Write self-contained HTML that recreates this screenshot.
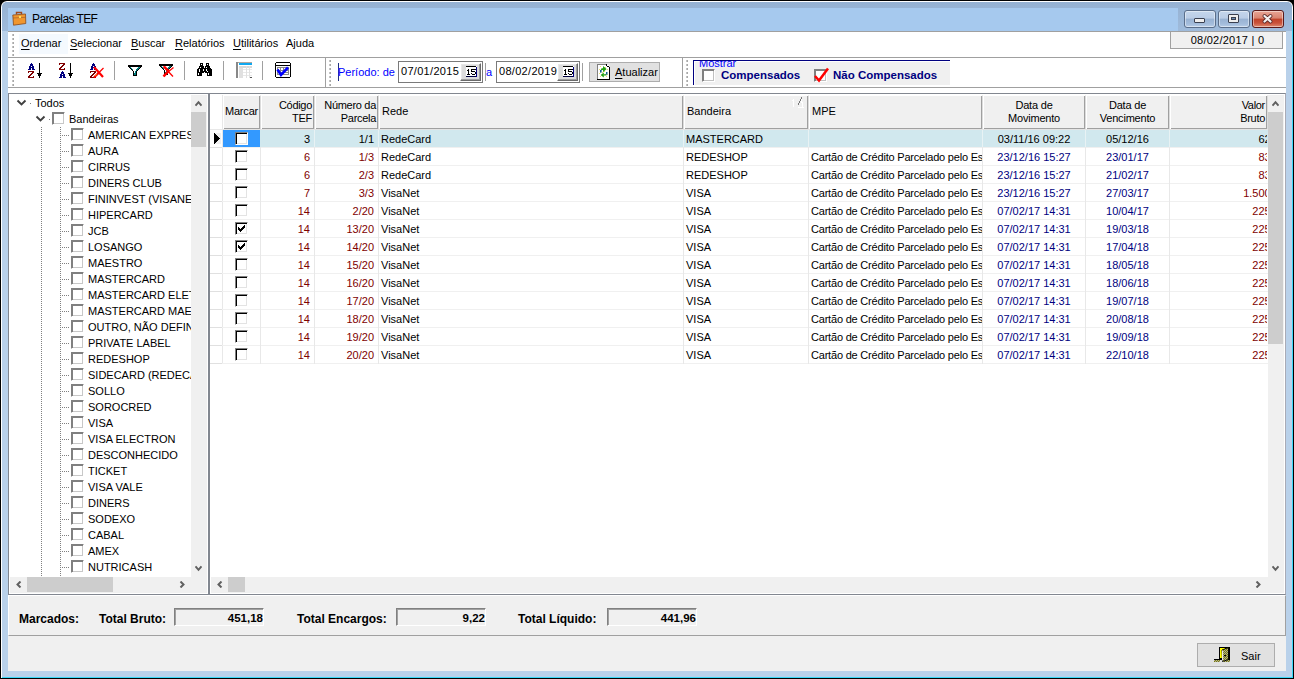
<!DOCTYPE html><html><head><meta charset="utf-8"><style>
*{box-sizing:border-box;margin:0;padding:0}
html,body{width:1294px;height:679px;overflow:hidden;background:#000}
body{position:relative;font-family:"Liberation Sans",sans-serif;font-size:11px;color:#000}
.a{position:absolute}
.t{position:absolute;white-space:nowrap;line-height:12px}
u{text-underline-offset:2px}
</style></head><body>
<div class="a" style="left:1px;top:1px;width:1292px;height:677px;background:#fff;border-radius:6px 6px 0 0"></div>
<div class="a" style="left:2px;top:2px;width:1290px;height:675px;background:#b9d1ea;border-radius:5px 5px 0 0"></div>
<div class="a" style="left:2px;top:2px;width:1290px;height:29px;background:linear-gradient(#95b1d2,#9fbbdb);border-radius:5px 5px 0 0"></div>
<div class="a" style="left:1292px;top:20px;width:1px;height:658px;background:#3ad8f8"></div>
<div class="a" style="left:2px;top:677px;width:1291px;height:1px;background:#3ad8f8"></div>
<div class="a" style="left:8px;top:8px;width:1170px;height:23px;background:#a6c9ee"></div>
<div class="t" style="left:32px;top:12px;font-size:12px;line-height:14px;letter-spacing:-0.6px">Parcelas TEF</div>
<svg class="a" style="left:12px;top:11px" width="15" height="15" viewBox="0 0 15 15">
<path d="M4.5 3.5 V1.5 H9.5 V3.5" fill="none" stroke="#a0481a" stroke-width="1.4"/>
<path d="M0.8 4 L13.5 3 L13.8 12.5 L1.5 14.2 Z" fill="#f0962e" stroke="#8a4a1a" stroke-width="0.8"/>
<path d="M1 7 L13.6 6.3" stroke="#9a5a2a" stroke-width="0.6"/>
<rect x="7" y="5" width="2" height="2" fill="#f8e060"/>
</svg>
<div class="a" style="left:1184px;top:10px;width:32px;height:18px;background:linear-gradient(#c4d6ec 0%,#bacde6 45%,#98b2d2 50%,#a3bcdb 80%,#b7cde7 100%);border:1px solid #5a6e8a;border-radius:3px;box-shadow:inset 0 0 0 1px rgba(255,255,255,.45)"></div>
<div class="a" style="left:1218px;top:10px;width:32px;height:18px;background:linear-gradient(#c4d6ec 0%,#bacde6 45%,#98b2d2 50%,#a3bcdb 80%,#b7cde7 100%);border:1px solid #5a6e8a;border-radius:3px;box-shadow:inset 0 0 0 1px rgba(255,255,255,.45)"></div>
<div class="a" style="left:1252px;top:10px;width:32px;height:18px;background:linear-gradient(#e8a596 0%,#d9836f 45%,#c0432a 50%,#c9523a 75%,#dd8a70 100%);border:1px solid #5a1a1a;border-radius:3px;box-shadow:inset 0 0 0 1px rgba(255,255,255,.45)"></div>
<div class="a" style="left:1194px;top:18px;width:11px;height:5px;background:#eee;border:1px solid #3a4050;border-radius:1px"></div>
<div class="a" style="left:1228px;top:14px;width:11px;height:9px;background:#eee;border:1px solid #3a4050;border-radius:1px"></div>
<div class="a" style="left:1231px;top:17px;width:5px;height:3px;background:#6a8ab0;border:1px solid #3a4050"></div>
<svg class="a" style="left:1261px;top:13px" width="14" height="12" viewBox="0 0 14 12">
<path d="M3.5 3 L9.5 8.5 M9.5 3 L3.5 8.5" stroke="#5a2a2a" stroke-width="3.8" stroke-linecap="round"/>
<path d="M3.5 3 L9.5 8.5 M9.5 3 L3.5 8.5" stroke="#f4f0f0" stroke-width="2.2" stroke-linecap="round"/>
</svg>
<div class="a" style="left:8px;top:31px;width:1278px;height:640px;background:#f0f0f0"></div>
<div class="a" style="left:8px;top:31px;width:1278px;height:27px;background:#fff;border-top:1px solid #a0a0a0;border-bottom:1px solid #a0a0a0"></div>
<div class="a" style="left:8px;top:57px;width:1278px;height:31px;background:#fff;border-top:1px solid #a0a0a0;border-bottom:1px solid #a0a0a0"></div>
<div class="a" style="left:8px;top:88px;width:1278px;height:5px;background:#fff"></div>
<div class="a" style="left:12px;top:34px;width:2px;height:2px;background:#a8a8a8;box-shadow:inset 1px 0 0 #c4c4c4"></div>
<div class="a" style="left:12px;top:38px;width:2px;height:2px;background:#a8a8a8;box-shadow:inset 1px 0 0 #c4c4c4"></div>
<div class="a" style="left:12px;top:42px;width:2px;height:2px;background:#a8a8a8;box-shadow:inset 1px 0 0 #c4c4c4"></div>
<div class="a" style="left:12px;top:46px;width:2px;height:2px;background:#a8a8a8;box-shadow:inset 1px 0 0 #c4c4c4"></div>
<div class="a" style="left:12px;top:50px;width:2px;height:2px;background:#a8a8a8;box-shadow:inset 1px 0 0 #c4c4c4"></div>
<div class="a" style="left:12px;top:54px;width:2px;height:2px;background:#a8a8a8;box-shadow:inset 1px 0 0 #c4c4c4"></div>
<div class="a" style="left:19px;top:34px;width:49px;height:20px;background:#f4f9fe"></div>
<div class="t" style="left:21px;top:37px"><u>O</u>rdenar</div>
<div class="t" style="left:70px;top:37px"><u>S</u>elecionar</div>
<div class="t" style="left:131px;top:37px"><u>B</u>uscar</div>
<div class="t" style="left:175px;top:37px"><u>R</u>elatórios</div>
<div class="t" style="left:233px;top:37px"><u>U</u>tilitários</div>
<div class="t" style="left:286px;top:37px">Ajuda</div>
<div class="a" style="left:1170px;top:31px;width:113px;height:18px;background:#f0f0f0;border:1px solid #a0a0a0"></div>
<div class="t" style="left:1171px;top:34px;width:113px;text-align:center;letter-spacing:0.25px">08/02/2017 | 0</div>
<div class="a" style="left:12px;top:60px;width:2px;height:2px;background:#a8a8a8;box-shadow:inset 1px 0 0 #c4c4c4"></div>
<div class="a" style="left:12px;top:64px;width:2px;height:2px;background:#a8a8a8;box-shadow:inset 1px 0 0 #c4c4c4"></div>
<div class="a" style="left:12px;top:68px;width:2px;height:2px;background:#a8a8a8;box-shadow:inset 1px 0 0 #c4c4c4"></div>
<div class="a" style="left:12px;top:72px;width:2px;height:2px;background:#a8a8a8;box-shadow:inset 1px 0 0 #c4c4c4"></div>
<div class="a" style="left:12px;top:76px;width:2px;height:2px;background:#a8a8a8;box-shadow:inset 1px 0 0 #c4c4c4"></div>
<div class="a" style="left:12px;top:80px;width:2px;height:2px;background:#a8a8a8;box-shadow:inset 1px 0 0 #c4c4c4"></div>
<div class="a" style="left:12px;top:84px;width:2px;height:2px;background:#a8a8a8;box-shadow:inset 1px 0 0 #c4c4c4"></div>
<svg class="a" style="left:28px;top:63px" width="7" height="15" shape-rendering="crispEdges"><rect x="3" y="0" width="1" height="1" fill="#000080"/><rect x="2" y="1" width="3" height="1" fill="#000080"/><rect x="2" y="2" width="3" height="1" fill="#000080"/><rect x="1" y="3" width="2" height="1" fill="#000080"/><rect x="4" y="3" width="2" height="1" fill="#000080"/><rect x="1" y="4" width="5" height="1" fill="#000080"/><rect x="1" y="5" width="2" height="1" fill="#000080"/><rect x="4" y="5" width="2" height="1" fill="#000080"/><rect x="0" y="6" width="3" height="1" fill="#000080"/><rect x="4" y="6" width="3" height="1" fill="#000080"/><rect x="0" y="8" width="6" height="1" fill="#800000"/><rect x="0" y="9" width="1" height="1" fill="#800000"/><rect x="4" y="9" width="2" height="1" fill="#800000"/><rect x="3" y="10" width="2" height="1" fill="#800000"/><rect x="2" y="11" width="2" height="1" fill="#800000"/><rect x="1" y="12" width="2" height="1" fill="#800000"/><rect x="0" y="13" width="2" height="1" fill="#800000"/><rect x="5" y="13" width="1" height="1" fill="#800000"/><rect x="0" y="14" width="6" height="1" fill="#800000"/></svg>
<svg class="a" style="left:37px;top:63px" width="5" height="15" shape-rendering="crispEdges"><rect x="2" y="0" width="1" height="1" fill="#000"/><rect x="2" y="1" width="1" height="1" fill="#000"/><rect x="2" y="2" width="1" height="1" fill="#000"/><rect x="2" y="3" width="1" height="1" fill="#000"/><rect x="2" y="4" width="1" height="1" fill="#000"/><rect x="2" y="5" width="1" height="1" fill="#000"/><rect x="2" y="6" width="1" height="1" fill="#000"/><rect x="2" y="7" width="1" height="1" fill="#000"/><rect x="2" y="8" width="1" height="1" fill="#000"/><rect x="2" y="9" width="1" height="1" fill="#000"/><rect x="0" y="10" width="5" height="1" fill="#000"/><rect x="1" y="11" width="3" height="1" fill="#000"/><rect x="1" y="12" width="3" height="1" fill="#000"/><rect x="2" y="13" width="1" height="1" fill="#000"/><rect x="2" y="14" width="1" height="1" fill="#000"/></svg>
<svg class="a" style="left:59px;top:63px" width="7" height="15" shape-rendering="crispEdges"><rect x="0" y="0" width="6" height="1" fill="#800000"/><rect x="0" y="1" width="1" height="1" fill="#800000"/><rect x="4" y="1" width="2" height="1" fill="#800000"/><rect x="3" y="2" width="2" height="1" fill="#800000"/><rect x="2" y="3" width="2" height="1" fill="#800000"/><rect x="1" y="4" width="2" height="1" fill="#800000"/><rect x="0" y="5" width="2" height="1" fill="#800000"/><rect x="5" y="5" width="1" height="1" fill="#800000"/><rect x="0" y="6" width="6" height="1" fill="#800000"/><rect x="3" y="8" width="1" height="1" fill="#000080"/><rect x="2" y="9" width="3" height="1" fill="#000080"/><rect x="2" y="10" width="3" height="1" fill="#000080"/><rect x="1" y="11" width="2" height="1" fill="#000080"/><rect x="4" y="11" width="2" height="1" fill="#000080"/><rect x="1" y="12" width="5" height="1" fill="#000080"/><rect x="1" y="13" width="2" height="1" fill="#000080"/><rect x="4" y="13" width="2" height="1" fill="#000080"/><rect x="0" y="14" width="3" height="1" fill="#000080"/><rect x="4" y="14" width="3" height="1" fill="#000080"/></svg>
<svg class="a" style="left:68px;top:63px" width="5" height="15" shape-rendering="crispEdges"><rect x="2" y="0" width="1" height="1" fill="#000"/><rect x="2" y="1" width="1" height="1" fill="#000"/><rect x="2" y="2" width="1" height="1" fill="#000"/><rect x="2" y="3" width="1" height="1" fill="#000"/><rect x="2" y="4" width="1" height="1" fill="#000"/><rect x="2" y="5" width="1" height="1" fill="#000"/><rect x="2" y="6" width="1" height="1" fill="#000"/><rect x="2" y="7" width="1" height="1" fill="#000"/><rect x="2" y="8" width="1" height="1" fill="#000"/><rect x="2" y="9" width="1" height="1" fill="#000"/><rect x="0" y="10" width="5" height="1" fill="#000"/><rect x="1" y="11" width="3" height="1" fill="#000"/><rect x="1" y="12" width="3" height="1" fill="#000"/><rect x="2" y="13" width="1" height="1" fill="#000"/><rect x="2" y="14" width="1" height="1" fill="#000"/></svg>
<svg class="a" style="left:90px;top:63px" width="7" height="15" shape-rendering="crispEdges"><rect x="3" y="0" width="1" height="1" fill="#000080"/><rect x="2" y="1" width="3" height="1" fill="#000080"/><rect x="2" y="2" width="3" height="1" fill="#000080"/><rect x="1" y="3" width="2" height="1" fill="#000080"/><rect x="4" y="3" width="2" height="1" fill="#000080"/><rect x="1" y="4" width="5" height="1" fill="#000080"/><rect x="1" y="5" width="2" height="1" fill="#000080"/><rect x="4" y="5" width="2" height="1" fill="#000080"/><rect x="0" y="6" width="3" height="1" fill="#000080"/><rect x="4" y="6" width="3" height="1" fill="#000080"/><rect x="0" y="8" width="6" height="1" fill="#800000"/><rect x="0" y="9" width="1" height="1" fill="#800000"/><rect x="4" y="9" width="2" height="1" fill="#800000"/><rect x="3" y="10" width="2" height="1" fill="#800000"/><rect x="2" y="11" width="2" height="1" fill="#800000"/><rect x="1" y="12" width="2" height="1" fill="#800000"/><rect x="0" y="13" width="2" height="1" fill="#800000"/><rect x="5" y="13" width="1" height="1" fill="#800000"/><rect x="0" y="14" width="6" height="1" fill="#800000"/></svg>
<svg class="a" style="left:90px;top:63px" width="16" height="16"><path d="M4 4 L13 14" stroke="#f00" stroke-width="2.2"/><path d="M13.5 5 L8.5 10" stroke="#f00" stroke-width="1.2"/><path d="M9 9.5 L4 14.5" stroke="#f00" stroke-width="2.2"/><path d="M5 13 L7 11" stroke="#f90" stroke-width="0.8"/></svg>
<div class="a" style="left:114px;top:61px;width:2px;height:19px;background:#a0a0a0;border-right:1px solid #fff"></div>
<div class="a" style="left:184px;top:61px;width:2px;height:19px;background:#a0a0a0;border-right:1px solid #fff"></div>
<div class="a" style="left:223px;top:61px;width:2px;height:19px;background:#a0a0a0;border-right:1px solid #fff"></div>
<div class="a" style="left:262px;top:61px;width:2px;height:19px;background:#a0a0a0;border-right:1px solid #fff"></div>
<svg class="a" style="left:128px;top:65px" width="14" height="11" shape-rendering="crispEdges"><rect x="0" y="0" width="14" height="1" fill="#000"/><rect x="0" y="1" width="14" height="1" fill="#000"/><rect x="1" y="2" width="1" height="1" fill="#000"/><rect x="2" y="2" width="1" height="1" fill="#008080"/><rect x="3" y="2" width="1" height="1" fill="#fff"/><rect x="9" y="2" width="1" height="1" fill="#fff"/><rect x="10" y="2" width="2" height="1" fill="#008080"/><rect x="12" y="2" width="1" height="1" fill="#000"/><rect x="2" y="3" width="1" height="1" fill="#000"/><rect x="3" y="3" width="1" height="1" fill="#008080"/><rect x="4" y="3" width="1" height="1" fill="#fff"/><rect x="8" y="3" width="1" height="1" fill="#fff"/><rect x="9" y="3" width="2" height="1" fill="#008080"/><rect x="11" y="3" width="1" height="1" fill="#000"/><rect x="3" y="4" width="1" height="1" fill="#000"/><rect x="4" y="4" width="1" height="1" fill="#008080"/><rect x="5" y="4" width="1" height="1" fill="#fff"/><rect x="7" y="4" width="1" height="1" fill="#fff"/><rect x="8" y="4" width="2" height="1" fill="#008080"/><rect x="10" y="4" width="1" height="1" fill="#000"/><rect x="4" y="5" width="1" height="1" fill="#000"/><rect x="5" y="5" width="3" height="1" fill="#fff"/><rect x="8" y="5" width="1" height="1" fill="#008080"/><rect x="9" y="5" width="1" height="1" fill="#000"/><rect x="5" y="6" width="1" height="1" fill="#000"/><rect x="6" y="6" width="1" height="1" fill="#fff"/><rect x="7" y="6" width="1" height="1" fill="#008080"/><rect x="8" y="6" width="1" height="1" fill="#000"/><rect x="5" y="7" width="1" height="1" fill="#000"/><rect x="6" y="7" width="1" height="1" fill="#fff"/><rect x="7" y="7" width="1" height="1" fill="#008080"/><rect x="8" y="7" width="1" height="1" fill="#000"/><rect x="5" y="8" width="1" height="1" fill="#000"/><rect x="6" y="8" width="2" height="1" fill="#008080"/><rect x="8" y="8" width="1" height="1" fill="#000"/><rect x="5" y="9" width="1" height="1" fill="#000"/><rect x="6" y="9" width="2" height="1" fill="#008080"/><rect x="8" y="9" width="1" height="1" fill="#000"/><rect x="5" y="10" width="4" height="1" fill="#000"/></svg>
<svg class="a" style="left:159px;top:64px" width="14" height="11" shape-rendering="crispEdges"><rect x="0" y="0" width="14" height="1" fill="#000"/><rect x="0" y="1" width="14" height="1" fill="#000"/><rect x="1" y="2" width="1" height="1" fill="#000"/><rect x="2" y="2" width="1" height="1" fill="#008080"/><rect x="3" y="2" width="1" height="1" fill="#fff"/><rect x="9" y="2" width="1" height="1" fill="#fff"/><rect x="10" y="2" width="2" height="1" fill="#008080"/><rect x="12" y="2" width="1" height="1" fill="#000"/><rect x="2" y="3" width="1" height="1" fill="#000"/><rect x="3" y="3" width="1" height="1" fill="#008080"/><rect x="4" y="3" width="1" height="1" fill="#fff"/><rect x="8" y="3" width="1" height="1" fill="#fff"/><rect x="9" y="3" width="2" height="1" fill="#008080"/><rect x="11" y="3" width="1" height="1" fill="#000"/><rect x="3" y="4" width="1" height="1" fill="#000"/><rect x="4" y="4" width="1" height="1" fill="#008080"/><rect x="5" y="4" width="1" height="1" fill="#fff"/><rect x="7" y="4" width="1" height="1" fill="#fff"/><rect x="8" y="4" width="2" height="1" fill="#008080"/><rect x="10" y="4" width="1" height="1" fill="#000"/><rect x="4" y="5" width="1" height="1" fill="#000"/><rect x="5" y="5" width="3" height="1" fill="#fff"/><rect x="8" y="5" width="1" height="1" fill="#008080"/><rect x="9" y="5" width="1" height="1" fill="#000"/><rect x="5" y="6" width="1" height="1" fill="#000"/><rect x="6" y="6" width="1" height="1" fill="#fff"/><rect x="7" y="6" width="1" height="1" fill="#008080"/><rect x="8" y="6" width="1" height="1" fill="#000"/><rect x="5" y="7" width="1" height="1" fill="#000"/><rect x="6" y="7" width="1" height="1" fill="#fff"/><rect x="7" y="7" width="1" height="1" fill="#008080"/><rect x="8" y="7" width="1" height="1" fill="#000"/><rect x="5" y="8" width="1" height="1" fill="#000"/><rect x="6" y="8" width="2" height="1" fill="#008080"/><rect x="8" y="8" width="1" height="1" fill="#000"/><rect x="5" y="9" width="1" height="1" fill="#000"/><rect x="6" y="9" width="2" height="1" fill="#008080"/><rect x="8" y="9" width="1" height="1" fill="#000"/><rect x="5" y="10" width="4" height="1" fill="#000"/></svg>
<svg class="a" style="left:159px;top:63px" width="16" height="16"><path d="M4.5 3.5 L14 13.5" stroke="#f00" stroke-width="1.3"/><path d="M5 3.5 L9.5 8" stroke="#f00" stroke-width="2.4"/><path d="M14.5 4.5 L9 9" stroke="#f00" stroke-width="1.3"/><path d="M9.5 8 L4.5 13.5" stroke="#f00" stroke-width="2.6"/></svg>
<svg class="a" style="left:197px;top:63px" width="15" height="13" shape-rendering="crispEdges"><rect x="3" y="0" width="3" height="1" fill="#000"/><rect x="9" y="0" width="3" height="1" fill="#000"/><rect x="3" y="1" width="1" height="1" fill="#000"/><rect x="5" y="1" width="1" height="1" fill="#000"/><rect x="9" y="1" width="1" height="1" fill="#000"/><rect x="11" y="1" width="1" height="1" fill="#000"/><rect x="3" y="2" width="3" height="1" fill="#000"/><rect x="9" y="2" width="3" height="1" fill="#000"/><rect x="2" y="3" width="5" height="1" fill="#000"/><rect x="8" y="3" width="5" height="1" fill="#000"/><rect x="2" y="4" width="1" height="1" fill="#000"/><rect x="4" y="4" width="3" height="1" fill="#000"/><rect x="8" y="4" width="1" height="1" fill="#000"/><rect x="10" y="4" width="3" height="1" fill="#000"/><rect x="1" y="5" width="13" height="1" fill="#000"/><rect x="0" y="6" width="2" height="1" fill="#000"/><rect x="3" y="6" width="3" height="1" fill="#000"/><rect x="7" y="6" width="2" height="1" fill="#000"/><rect x="10" y="6" width="5" height="1" fill="#000"/><rect x="0" y="7" width="2" height="1" fill="#000"/><rect x="3" y="7" width="3" height="1" fill="#000"/><rect x="7" y="7" width="2" height="1" fill="#000"/><rect x="10" y="7" width="5" height="1" fill="#000"/><rect x="0" y="8" width="2" height="1" fill="#000"/><rect x="3" y="8" width="7" height="1" fill="#000"/><rect x="11" y="8" width="4" height="1" fill="#000"/><rect x="0" y="9" width="7" height="1" fill="#000"/><rect x="8" y="9" width="7" height="1" fill="#000"/><rect x="0" y="10" width="1" height="1" fill="#000"/><rect x="2" y="10" width="3" height="1" fill="#000"/><rect x="10" y="10" width="1" height="1" fill="#000"/><rect x="12" y="10" width="3" height="1" fill="#000"/><rect x="0" y="11" width="1" height="1" fill="#000"/><rect x="2" y="11" width="3" height="1" fill="#000"/><rect x="10" y="11" width="1" height="1" fill="#000"/><rect x="12" y="11" width="3" height="1" fill="#000"/><rect x="0" y="12" width="5" height="1" fill="#000"/><rect x="10" y="12" width="5" height="1" fill="#000"/></svg>
<svg class="a" style="left:236px;top:62px" width="16" height="16" shape-rendering="crispEdges">
<rect x="0" y="0" width="16" height="1" fill="#b0a8a0"/>
<rect x="0" y="0" width="2" height="16" fill="#888"/>
<rect x="2" y="1" width="14" height="15" fill="#fff"/>
<rect x="3" y="1" width="13" height="2" fill="#10a8f0"/>
<rect x="3" y="4" width="13" height="2" fill="#d8d8d8"/>
<rect x="3" y="6" width="4" height="10" fill="#e0e0e0"/>
<rect x="7" y="7" width="9" height="1" fill="#e8e8e8"/><rect x="7" y="10" width="9" height="1" fill="#e8e8e8"/><rect x="7" y="13" width="9" height="1" fill="#e8e8e8"/>
<rect x="10" y="4" width="1" height="12" fill="#e0e0e0"/><rect x="13" y="4" width="1" height="12" fill="#e0e0e0"/>
<rect x="14" y="15" width="2" height="1" fill="#555"/>
</svg>
<svg class="a" style="left:275px;top:62px" width="16" height="16" shape-rendering="crispEdges">
<rect x="1" y="0" width="14" height="16" fill="#000"/><rect x="0" y="1" width="16" height="14" fill="#000"/>
<rect x="1" y="1" width="14" height="14" fill="#fff"/>
<rect x="1" y="3" width="14" height="1" fill="#000"/>
<rect x="2" y="5" width="12" height="1" fill="#888"/><rect x="2" y="12" width="12" height="1" fill="#888"/>
<rect x="2" y="5" width="1" height="8" fill="#888"/><rect x="13" y="5" width="1" height="8" fill="#888"/>
<rect x="2" y="8" width="12" height="1" fill="#888"/><rect x="2" y="10" width="12" height="1" fill="#888"/>
<rect x="5" y="5" width="1" height="8" fill="#888"/><rect x="8" y="5" width="1" height="8" fill="#888"/>
</svg>
<svg class="a" style="left:275px;top:62px" width="16" height="16"><path d="M2.5 7.5 L6 13 L13 5.5" fill="none" stroke="#0000ff" stroke-width="2.6" stroke-linejoin="miter"/></svg>
<div class="a" style="left:325px;top:58px;width:1px;height:29px;background:#a0a0a0"></div>
<div class="a" style="left:329px;top:60px;width:2px;height:2px;background:#a8a8a8;box-shadow:inset 1px 0 0 #c4c4c4"></div>
<div class="a" style="left:329px;top:64px;width:2px;height:2px;background:#a8a8a8;box-shadow:inset 1px 0 0 #c4c4c4"></div>
<div class="a" style="left:329px;top:68px;width:2px;height:2px;background:#a8a8a8;box-shadow:inset 1px 0 0 #c4c4c4"></div>
<div class="a" style="left:329px;top:72px;width:2px;height:2px;background:#a8a8a8;box-shadow:inset 1px 0 0 #c4c4c4"></div>
<div class="a" style="left:329px;top:76px;width:2px;height:2px;background:#a8a8a8;box-shadow:inset 1px 0 0 #c4c4c4"></div>
<div class="a" style="left:329px;top:80px;width:2px;height:2px;background:#a8a8a8;box-shadow:inset 1px 0 0 #c4c4c4"></div>
<div class="a" style="left:329px;top:84px;width:2px;height:2px;background:#a8a8a8;box-shadow:inset 1px 0 0 #c4c4c4"></div>
<div class="a" style="left:338px;top:63px;width:1px;height:18px;background:#203080"></div>
<div class="t" style="left:338px;top:66px;color:#0000ff">Período: de</div>
<div class="a" style="left:398px;top:61px;width:85px;height:22px;background:#fff;border:1px solid #7a7a7a"></div>
<div class="t" style="left:401px;top:65px;letter-spacing:0.3px">07/01/2015</div>
<div class="a" style="left:460px;top:63px;width:21px;height:18px;background:#dcdcdc;border-top:1px solid #fff;border-left:1px solid #fff;border-right:1px solid #696969;border-bottom:1px solid #696969;box-shadow:inset -1px -1px 0 #a0a0a0, inset 1px 1px 0 #e8e8e8"></div>
<svg class="a" style="left:466px;top:66px" width="12" height="12" shape-rendering="crispEdges">
<rect x="0" y="0" width="11" height="11" fill="#fff"/><rect x="0" y="0" width="10" height="1" fill="#000"/>
<rect x="10" y="1" width="1" height="10" fill="#000080"/><rect x="0" y="10" width="10" height="1" fill="#000040"/>
<rect x="2" y="3" width="1" height="6" fill="#000"/><rect x="1" y="4" width="1" height="1" fill="#000"/><rect x="1" y="8" width="3" height="1" fill="#000"/>
<rect x="5" y="3" width="5" height="1" fill="#000"/><rect x="5" y="4" width="1" height="1" fill="#000"/><rect x="5" y="5" width="4" height="1" fill="#000"/>
<rect x="9" y="6" width="1" height="2" fill="#000"/><rect x="5" y="7" width="1" height="1" fill="#000"/><rect x="6" y="8" width="3" height="1" fill="#000"/>
</svg>
<div class="a" style="left:485px;top:63px;width:1px;height:18px;background:#a0a0a0"></div>
<div class="t" style="left:486px;top:66px;color:#0000ff">a</div>
<div class="a" style="left:496px;top:61px;width:84px;height:22px;background:#fff;border:1px solid #7a7a7a"></div>
<div class="t" style="left:499px;top:65px;letter-spacing:0.3px">08/02/2019</div>
<div class="a" style="left:557px;top:63px;width:21px;height:18px;background:#dcdcdc;border-top:1px solid #fff;border-left:1px solid #fff;border-right:1px solid #696969;border-bottom:1px solid #696969;box-shadow:inset -1px -1px 0 #a0a0a0, inset 1px 1px 0 #e8e8e8"></div>
<svg class="a" style="left:563px;top:66px" width="12" height="12" shape-rendering="crispEdges">
<rect x="0" y="0" width="11" height="11" fill="#fff"/><rect x="0" y="0" width="10" height="1" fill="#000"/>
<rect x="10" y="1" width="1" height="10" fill="#000080"/><rect x="0" y="10" width="10" height="1" fill="#000040"/>
<rect x="2" y="3" width="1" height="6" fill="#000"/><rect x="1" y="4" width="1" height="1" fill="#000"/><rect x="1" y="8" width="3" height="1" fill="#000"/>
<rect x="5" y="3" width="5" height="1" fill="#000"/><rect x="5" y="4" width="1" height="1" fill="#000"/><rect x="5" y="5" width="4" height="1" fill="#000"/>
<rect x="9" y="6" width="1" height="2" fill="#000"/><rect x="5" y="7" width="1" height="1" fill="#000"/><rect x="6" y="8" width="3" height="1" fill="#000"/>
</svg>
<div class="a" style="left:582px;top:63px;width:1px;height:18px;background:#a0a0a0"></div>
<div class="a" style="left:589px;top:62px;width:71px;height:20px;background:#e1e1e1;border:1px solid #adadad"></div>
<svg class="a" style="left:597px;top:64px" width="14" height="16" shape-rendering="crispEdges">
<rect x="1" y="1" width="11" height="14" fill="#fff"/><rect x="9" y="1" width="3" height="2" fill="#fff"/>
<rect x="0" y="0" width="1" height="15" fill="#808080"/><rect x="0" y="0" width="9" height="1" fill="#808080"/>
<rect x="9" y="0" width="1" height="2" fill="#000"/><rect x="10" y="2" width="2" height="1" fill="#000"/><rect x="12" y="3" width="1" height="13" fill="#000"/><rect x="0" y="15" width="13" height="1" fill="#000"/>
<g fill="#e8e070"><rect x="3" y="2" width="1" height="1"/><rect x="8" y="3" width="1" height="1"/><rect x="10" y="5" width="1" height="1"/><rect x="2" y="9" width="1" height="1"/><rect x="3" y="12" width="1" height="1"/><rect x="9" y="12" width="1" height="1"/><rect x="10" y="10" width="1" height="1"/><rect x="5" y="8" width="1" height="1"/><rect x="7" y="7" width="1" height="1"/><rect x="2" y="5" width="1" height="1"/></g>
</svg>
<svg class="a" style="left:597px;top:64px" width="14" height="16">
<path d="M6 2 L6 8.2 L9.6 5.1 Z" fill="#20a010"/><path d="M3.5 6.5 L4.5 4.3 H6.2 V6 H5 Z" fill="#20a010"/>
<rect x="3" y="6" width="1.6" height="2.6" fill="#106090"/>
<path d="M6.8 8.6 L6.8 13.6 L3.6 11.1 Z" fill="#20a010"/><path d="M6.6 10.3 H8.6 L9.4 9 V11.6 H6.6 Z" fill="#20a010"/>
<rect x="9" y="8" width="1.5" height="2.6" fill="#106090"/>
</svg>
<div class="t" style="left:615px;top:66px"><u>A</u>tualizar</div>
<div class="a" style="left:682px;top:58px;width:1px;height:29px;background:#a0a0a0"></div>
<div class="a" style="left:686px;top:60px;width:2px;height:2px;background:#a8a8a8;box-shadow:inset 1px 0 0 #c4c4c4"></div>
<div class="a" style="left:686px;top:64px;width:2px;height:2px;background:#a8a8a8;box-shadow:inset 1px 0 0 #c4c4c4"></div>
<div class="a" style="left:686px;top:68px;width:2px;height:2px;background:#a8a8a8;box-shadow:inset 1px 0 0 #c4c4c4"></div>
<div class="a" style="left:686px;top:72px;width:2px;height:2px;background:#a8a8a8;box-shadow:inset 1px 0 0 #c4c4c4"></div>
<div class="a" style="left:686px;top:76px;width:2px;height:2px;background:#a8a8a8;box-shadow:inset 1px 0 0 #c4c4c4"></div>
<div class="a" style="left:686px;top:80px;width:2px;height:2px;background:#a8a8a8;box-shadow:inset 1px 0 0 #c4c4c4"></div>
<div class="a" style="left:686px;top:84px;width:2px;height:2px;background:#a8a8a8;box-shadow:inset 1px 0 0 #c4c4c4"></div>
<div class="a" style="left:693px;top:60px;width:257px;height:25px;background:#f0f0f0;border-left:1px solid #000080;border-top:1px solid #000080;box-shadow:inset 1px 1px 0 #fff"></div>
<div class="a" style="left:694px;top:61px;width:48px;height:6px;overflow:hidden"><div class="t" style="left:5px;top:-4px;color:#0000ff">Mostrar</div></div>
<div class="a" style="left:702px;top:69px;width:13px;height:13px;background:#fff;border-style:solid;border-width:1px;border-color:#808080 #fff #fff #808080;box-shadow:inset 1px 1px 0 #808080,inset -1px -1px 0 #c0c0c0"></div>
<div class="t" style="left:721px;top:68px;font-weight:bold;color:#000080;font-size:11.5px;line-height:14px">Compensados</div>
<div class="a" style="left:814px;top:69px;width:13px;height:13px;background:#fff;border-style:solid;border-width:1px;border-color:#808080 #fff #fff #808080;box-shadow:inset 1px 1px 0 #808080,inset -1px -1px 0 #c0c0c0"></div>
<svg class="a" style="left:813px;top:66px" width="17" height="17"><path d="M2 10 L6 14.5 L15 2.5" fill="none" stroke="#ff0000" stroke-width="2.5"/></svg>
<div class="t" style="left:833px;top:68px;font-weight:bold;color:#000080;font-size:11.5px;line-height:14px">Não Compensados</div>
<div class="a" style="left:8px;top:93px;width:201px;height:502px;background:#fff;border:1px solid #828790"></div>
<div class="a" style="left:209px;top:93px;width:1077px;height:502px;background:#fff;border:1px solid #828790;border-right-color:#a9abb6"></div>
<div class="a" style="left:191px;top:95px;width:16px;height:498px;background:#f0f0f0"></div>
<div class="a" style="left:10px;top:577px;width:197px;height:16px;background:#f0f0f0"></div>
<div class="a" style="left:191px;top:112px;width:15px;height:35px;background:#cdcdcd"></div>
<div class="a" style="left:27px;top:577px;width:86px;height:15px;background:#cdcdcd"></div>
<svg class="a" style="left:195px;top:100px" width="7" height="7"><path d="M0.5 5.7 L3.5 2.2 L6.5 5.7" fill="none" stroke="#606060" stroke-width="2"/></svg>
<svg class="a" style="left:195px;top:565px" width="7" height="7"><path d="M0.5 1.3 L3.5 4.8 L6.5 1.3" fill="none" stroke="#606060" stroke-width="2"/></svg>
<svg class="a" style="left:15px;top:581px" width="7" height="7"><path d="M5.5 0.5 L2.5 3.5 L5.5 6.5" fill="none" stroke="#606060" stroke-width="2"/></svg>
<svg class="a" style="left:179px;top:581px" width="7" height="7"><path d="M1.5 0.5 L4.5 3.5 L1.5 6.5" fill="none" stroke="#606060" stroke-width="2"/></svg>
<div class="a" style="left:41px;top:127px;width:1px;height:450px;background:repeating-linear-gradient(#808080 0 1px,transparent 1px 2px)"></div>
<div class="a" style="left:60px;top:127px;width:1px;height:450px;background:repeating-linear-gradient(#808080 0 1px,transparent 1px 2px)"></div>
<svg class="a" style="left:16px;top:99px" width="11" height="8"><path d="M1.5 1.5 L5.5 5.5 L9.5 1.5" fill="none" stroke="#404040" stroke-width="1.9"/></svg>
<div class="a" style="left:30px;top:103px;width:1px;height:1px;background:#808080"></div>
<div class="t" style="left:35px;top:97px">Todos</div>
<svg class="a" style="left:35px;top:115px" width="11" height="8"><path d="M1.5 1.5 L5.5 5.5 L9.5 1.5" fill="none" stroke="#404040" stroke-width="1.9"/></svg>
<div class="a" style="left:49px;top:119px;width:1px;height:1px;background:#808080"></div>
<div class="a" style="left:52px;top:112px;width:13px;height:13px;background:#fff;border-style:solid;border-width:1px;border-color:#808080 #fff #fff #808080;box-shadow:inset 1px 1px 0 #808080,inset -1px -1px 0 #c8c8c8"></div>
<div class="t" style="left:69px;top:113px">Bandeiras</div>
<div class="a" style="left:10px;top:95px;width:181px;height:482px;overflow:hidden">
<div class="a" style="left:52px;top:40px;width:7px;height:1px;background:repeating-linear-gradient(90deg,#808080 0 1px,transparent 1px 2px)"></div>
<div class="a" style="left:61px;top:33px;width:13px;height:13px;background:#fff;border-style:solid;border-width:1px;border-color:#808080 #fff #fff #808080;box-shadow:inset 1px 1px 0 #808080,inset -1px -1px 0 #c8c8c8"></div>
<div class="t" style="left:78px;top:34px">AMERICAN EXPRESS</div>
<div class="a" style="left:52px;top:56px;width:7px;height:1px;background:repeating-linear-gradient(90deg,#808080 0 1px,transparent 1px 2px)"></div>
<div class="a" style="left:61px;top:49px;width:13px;height:13px;background:#fff;border-style:solid;border-width:1px;border-color:#808080 #fff #fff #808080;box-shadow:inset 1px 1px 0 #808080,inset -1px -1px 0 #c8c8c8"></div>
<div class="t" style="left:78px;top:50px">AURA</div>
<div class="a" style="left:52px;top:72px;width:7px;height:1px;background:repeating-linear-gradient(90deg,#808080 0 1px,transparent 1px 2px)"></div>
<div class="a" style="left:61px;top:65px;width:13px;height:13px;background:#fff;border-style:solid;border-width:1px;border-color:#808080 #fff #fff #808080;box-shadow:inset 1px 1px 0 #808080,inset -1px -1px 0 #c8c8c8"></div>
<div class="t" style="left:78px;top:66px">CIRRUS</div>
<div class="a" style="left:52px;top:88px;width:7px;height:1px;background:repeating-linear-gradient(90deg,#808080 0 1px,transparent 1px 2px)"></div>
<div class="a" style="left:61px;top:81px;width:13px;height:13px;background:#fff;border-style:solid;border-width:1px;border-color:#808080 #fff #fff #808080;box-shadow:inset 1px 1px 0 #808080,inset -1px -1px 0 #c8c8c8"></div>
<div class="t" style="left:78px;top:82px">DINERS CLUB</div>
<div class="a" style="left:52px;top:104px;width:7px;height:1px;background:repeating-linear-gradient(90deg,#808080 0 1px,transparent 1px 2px)"></div>
<div class="a" style="left:61px;top:97px;width:13px;height:13px;background:#fff;border-style:solid;border-width:1px;border-color:#808080 #fff #fff #808080;box-shadow:inset 1px 1px 0 #808080,inset -1px -1px 0 #c8c8c8"></div>
<div class="t" style="left:78px;top:98px">FININVEST (VISANET)</div>
<div class="a" style="left:52px;top:120px;width:7px;height:1px;background:repeating-linear-gradient(90deg,#808080 0 1px,transparent 1px 2px)"></div>
<div class="a" style="left:61px;top:113px;width:13px;height:13px;background:#fff;border-style:solid;border-width:1px;border-color:#808080 #fff #fff #808080;box-shadow:inset 1px 1px 0 #808080,inset -1px -1px 0 #c8c8c8"></div>
<div class="t" style="left:78px;top:114px">HIPERCARD</div>
<div class="a" style="left:52px;top:136px;width:7px;height:1px;background:repeating-linear-gradient(90deg,#808080 0 1px,transparent 1px 2px)"></div>
<div class="a" style="left:61px;top:129px;width:13px;height:13px;background:#fff;border-style:solid;border-width:1px;border-color:#808080 #fff #fff #808080;box-shadow:inset 1px 1px 0 #808080,inset -1px -1px 0 #c8c8c8"></div>
<div class="t" style="left:78px;top:130px">JCB</div>
<div class="a" style="left:52px;top:152px;width:7px;height:1px;background:repeating-linear-gradient(90deg,#808080 0 1px,transparent 1px 2px)"></div>
<div class="a" style="left:61px;top:145px;width:13px;height:13px;background:#fff;border-style:solid;border-width:1px;border-color:#808080 #fff #fff #808080;box-shadow:inset 1px 1px 0 #808080,inset -1px -1px 0 #c8c8c8"></div>
<div class="t" style="left:78px;top:146px">LOSANGO</div>
<div class="a" style="left:52px;top:168px;width:7px;height:1px;background:repeating-linear-gradient(90deg,#808080 0 1px,transparent 1px 2px)"></div>
<div class="a" style="left:61px;top:161px;width:13px;height:13px;background:#fff;border-style:solid;border-width:1px;border-color:#808080 #fff #fff #808080;box-shadow:inset 1px 1px 0 #808080,inset -1px -1px 0 #c8c8c8"></div>
<div class="t" style="left:78px;top:162px">MAESTRO</div>
<div class="a" style="left:52px;top:184px;width:7px;height:1px;background:repeating-linear-gradient(90deg,#808080 0 1px,transparent 1px 2px)"></div>
<div class="a" style="left:61px;top:177px;width:13px;height:13px;background:#fff;border-style:solid;border-width:1px;border-color:#808080 #fff #fff #808080;box-shadow:inset 1px 1px 0 #808080,inset -1px -1px 0 #c8c8c8"></div>
<div class="t" style="left:78px;top:178px">MASTERCARD</div>
<div class="a" style="left:52px;top:200px;width:7px;height:1px;background:repeating-linear-gradient(90deg,#808080 0 1px,transparent 1px 2px)"></div>
<div class="a" style="left:61px;top:193px;width:13px;height:13px;background:#fff;border-style:solid;border-width:1px;border-color:#808080 #fff #fff #808080;box-shadow:inset 1px 1px 0 #808080,inset -1px -1px 0 #c8c8c8"></div>
<div class="t" style="left:78px;top:194px">MASTERCARD ELETRON</div>
<div class="a" style="left:52px;top:216px;width:7px;height:1px;background:repeating-linear-gradient(90deg,#808080 0 1px,transparent 1px 2px)"></div>
<div class="a" style="left:61px;top:209px;width:13px;height:13px;background:#fff;border-style:solid;border-width:1px;border-color:#808080 #fff #fff #808080;box-shadow:inset 1px 1px 0 #808080,inset -1px -1px 0 #c8c8c8"></div>
<div class="t" style="left:78px;top:210px">MASTERCARD MAESTRO</div>
<div class="a" style="left:52px;top:232px;width:7px;height:1px;background:repeating-linear-gradient(90deg,#808080 0 1px,transparent 1px 2px)"></div>
<div class="a" style="left:61px;top:225px;width:13px;height:13px;background:#fff;border-style:solid;border-width:1px;border-color:#808080 #fff #fff #808080;box-shadow:inset 1px 1px 0 #808080,inset -1px -1px 0 #c8c8c8"></div>
<div class="t" style="left:78px;top:226px">OUTRO, NÃO DEFINIDO</div>
<div class="a" style="left:52px;top:248px;width:7px;height:1px;background:repeating-linear-gradient(90deg,#808080 0 1px,transparent 1px 2px)"></div>
<div class="a" style="left:61px;top:241px;width:13px;height:13px;background:#fff;border-style:solid;border-width:1px;border-color:#808080 #fff #fff #808080;box-shadow:inset 1px 1px 0 #808080,inset -1px -1px 0 #c8c8c8"></div>
<div class="t" style="left:78px;top:242px">PRIVATE LABEL</div>
<div class="a" style="left:52px;top:264px;width:7px;height:1px;background:repeating-linear-gradient(90deg,#808080 0 1px,transparent 1px 2px)"></div>
<div class="a" style="left:61px;top:257px;width:13px;height:13px;background:#fff;border-style:solid;border-width:1px;border-color:#808080 #fff #fff #808080;box-shadow:inset 1px 1px 0 #808080,inset -1px -1px 0 #c8c8c8"></div>
<div class="t" style="left:78px;top:258px">REDESHOP</div>
<div class="a" style="left:52px;top:280px;width:7px;height:1px;background:repeating-linear-gradient(90deg,#808080 0 1px,transparent 1px 2px)"></div>
<div class="a" style="left:61px;top:273px;width:13px;height:13px;background:#fff;border-style:solid;border-width:1px;border-color:#808080 #fff #fff #808080;box-shadow:inset 1px 1px 0 #808080,inset -1px -1px 0 #c8c8c8"></div>
<div class="t" style="left:78px;top:274px">SIDECARD (REDECARD)</div>
<div class="a" style="left:52px;top:296px;width:7px;height:1px;background:repeating-linear-gradient(90deg,#808080 0 1px,transparent 1px 2px)"></div>
<div class="a" style="left:61px;top:289px;width:13px;height:13px;background:#fff;border-style:solid;border-width:1px;border-color:#808080 #fff #fff #808080;box-shadow:inset 1px 1px 0 #808080,inset -1px -1px 0 #c8c8c8"></div>
<div class="t" style="left:78px;top:290px">SOLLO</div>
<div class="a" style="left:52px;top:312px;width:7px;height:1px;background:repeating-linear-gradient(90deg,#808080 0 1px,transparent 1px 2px)"></div>
<div class="a" style="left:61px;top:305px;width:13px;height:13px;background:#fff;border-style:solid;border-width:1px;border-color:#808080 #fff #fff #808080;box-shadow:inset 1px 1px 0 #808080,inset -1px -1px 0 #c8c8c8"></div>
<div class="t" style="left:78px;top:306px">SOROCRED</div>
<div class="a" style="left:52px;top:328px;width:7px;height:1px;background:repeating-linear-gradient(90deg,#808080 0 1px,transparent 1px 2px)"></div>
<div class="a" style="left:61px;top:321px;width:13px;height:13px;background:#fff;border-style:solid;border-width:1px;border-color:#808080 #fff #fff #808080;box-shadow:inset 1px 1px 0 #808080,inset -1px -1px 0 #c8c8c8"></div>
<div class="t" style="left:78px;top:322px">VISA</div>
<div class="a" style="left:52px;top:344px;width:7px;height:1px;background:repeating-linear-gradient(90deg,#808080 0 1px,transparent 1px 2px)"></div>
<div class="a" style="left:61px;top:337px;width:13px;height:13px;background:#fff;border-style:solid;border-width:1px;border-color:#808080 #fff #fff #808080;box-shadow:inset 1px 1px 0 #808080,inset -1px -1px 0 #c8c8c8"></div>
<div class="t" style="left:78px;top:338px">VISA ELECTRON</div>
<div class="a" style="left:52px;top:360px;width:7px;height:1px;background:repeating-linear-gradient(90deg,#808080 0 1px,transparent 1px 2px)"></div>
<div class="a" style="left:61px;top:353px;width:13px;height:13px;background:#fff;border-style:solid;border-width:1px;border-color:#808080 #fff #fff #808080;box-shadow:inset 1px 1px 0 #808080,inset -1px -1px 0 #c8c8c8"></div>
<div class="t" style="left:78px;top:354px">DESCONHECIDO</div>
<div class="a" style="left:52px;top:376px;width:7px;height:1px;background:repeating-linear-gradient(90deg,#808080 0 1px,transparent 1px 2px)"></div>
<div class="a" style="left:61px;top:369px;width:13px;height:13px;background:#fff;border-style:solid;border-width:1px;border-color:#808080 #fff #fff #808080;box-shadow:inset 1px 1px 0 #808080,inset -1px -1px 0 #c8c8c8"></div>
<div class="t" style="left:78px;top:370px">TICKET</div>
<div class="a" style="left:52px;top:392px;width:7px;height:1px;background:repeating-linear-gradient(90deg,#808080 0 1px,transparent 1px 2px)"></div>
<div class="a" style="left:61px;top:385px;width:13px;height:13px;background:#fff;border-style:solid;border-width:1px;border-color:#808080 #fff #fff #808080;box-shadow:inset 1px 1px 0 #808080,inset -1px -1px 0 #c8c8c8"></div>
<div class="t" style="left:78px;top:386px">VISA VALE</div>
<div class="a" style="left:52px;top:408px;width:7px;height:1px;background:repeating-linear-gradient(90deg,#808080 0 1px,transparent 1px 2px)"></div>
<div class="a" style="left:61px;top:401px;width:13px;height:13px;background:#fff;border-style:solid;border-width:1px;border-color:#808080 #fff #fff #808080;box-shadow:inset 1px 1px 0 #808080,inset -1px -1px 0 #c8c8c8"></div>
<div class="t" style="left:78px;top:402px">DINERS</div>
<div class="a" style="left:52px;top:424px;width:7px;height:1px;background:repeating-linear-gradient(90deg,#808080 0 1px,transparent 1px 2px)"></div>
<div class="a" style="left:61px;top:417px;width:13px;height:13px;background:#fff;border-style:solid;border-width:1px;border-color:#808080 #fff #fff #808080;box-shadow:inset 1px 1px 0 #808080,inset -1px -1px 0 #c8c8c8"></div>
<div class="t" style="left:78px;top:418px">SODEXO</div>
<div class="a" style="left:52px;top:440px;width:7px;height:1px;background:repeating-linear-gradient(90deg,#808080 0 1px,transparent 1px 2px)"></div>
<div class="a" style="left:61px;top:433px;width:13px;height:13px;background:#fff;border-style:solid;border-width:1px;border-color:#808080 #fff #fff #808080;box-shadow:inset 1px 1px 0 #808080,inset -1px -1px 0 #c8c8c8"></div>
<div class="t" style="left:78px;top:434px">CABAL</div>
<div class="a" style="left:52px;top:456px;width:7px;height:1px;background:repeating-linear-gradient(90deg,#808080 0 1px,transparent 1px 2px)"></div>
<div class="a" style="left:61px;top:449px;width:13px;height:13px;background:#fff;border-style:solid;border-width:1px;border-color:#808080 #fff #fff #808080;box-shadow:inset 1px 1px 0 #808080,inset -1px -1px 0 #c8c8c8"></div>
<div class="t" style="left:78px;top:450px">AMEX</div>
<div class="a" style="left:52px;top:472px;width:7px;height:1px;background:repeating-linear-gradient(90deg,#808080 0 1px,transparent 1px 2px)"></div>
<div class="a" style="left:61px;top:465px;width:13px;height:13px;background:#fff;border-style:solid;border-width:1px;border-color:#808080 #fff #fff #808080;box-shadow:inset 1px 1px 0 #808080,inset -1px -1px 0 #c8c8c8"></div>
<div class="t" style="left:78px;top:466px">NUTRICASH</div>
</div>
<div class="a" style="left:1268px;top:95px;width:16px;height:498px;background:#f0f0f0"></div>
<div class="a" style="left:211px;top:577px;width:1073px;height:16px;background:#f0f0f0"></div>
<div class="a" style="left:1268px;top:112px;width:15px;height:232px;background:#cdcdcd"></div>
<div class="a" style="left:228px;top:577px;width:17px;height:15px;background:#cdcdcd"></div>
<svg class="a" style="left:1272px;top:100px" width="7" height="7"><path d="M0.5 5.7 L3.5 2.2 L6.5 5.7" fill="none" stroke="#606060" stroke-width="2"/></svg>
<svg class="a" style="left:1272px;top:565px" width="7" height="7"><path d="M0.5 1.3 L3.5 4.8 L6.5 1.3" fill="none" stroke="#606060" stroke-width="2"/></svg>
<svg class="a" style="left:216px;top:581px" width="7" height="7"><path d="M5.5 0.5 L2.5 3.5 L5.5 6.5" fill="none" stroke="#606060" stroke-width="2"/></svg>
<svg class="a" style="left:1255px;top:581px" width="7" height="7"><path d="M1.5 0.5 L4.5 3.5 L1.5 6.5" fill="none" stroke="#606060" stroke-width="2"/></svg>
<div class="a" style="left:210px;top:95px;width:1058px;height:482px;overflow:hidden">
<div class="a" style="left:12px;top:0px;width:1px;height:268px;background:#e8e8e8"></div>
<div class="a" style="left:0px;top:34px;width:12px;height:1px;background:#e8e8e8"></div>
<div class="a" style="left:0px;top:52px;width:1058px;height:1px;background:#f0f0f0"></div>
<div class="a" style="left:0px;top:52px;width:12px;height:1px;background:#e0e0e0"></div>
<div class="a" style="left:0px;top:70px;width:1058px;height:1px;background:#f0f0f0"></div>
<div class="a" style="left:0px;top:70px;width:12px;height:1px;background:#e0e0e0"></div>
<div class="a" style="left:0px;top:88px;width:1058px;height:1px;background:#f0f0f0"></div>
<div class="a" style="left:0px;top:88px;width:12px;height:1px;background:#e0e0e0"></div>
<div class="a" style="left:0px;top:106px;width:1058px;height:1px;background:#f0f0f0"></div>
<div class="a" style="left:0px;top:106px;width:12px;height:1px;background:#e0e0e0"></div>
<div class="a" style="left:0px;top:124px;width:1058px;height:1px;background:#f0f0f0"></div>
<div class="a" style="left:0px;top:124px;width:12px;height:1px;background:#e0e0e0"></div>
<div class="a" style="left:0px;top:142px;width:1058px;height:1px;background:#f0f0f0"></div>
<div class="a" style="left:0px;top:142px;width:12px;height:1px;background:#e0e0e0"></div>
<div class="a" style="left:0px;top:160px;width:1058px;height:1px;background:#f0f0f0"></div>
<div class="a" style="left:0px;top:160px;width:12px;height:1px;background:#e0e0e0"></div>
<div class="a" style="left:0px;top:178px;width:1058px;height:1px;background:#f0f0f0"></div>
<div class="a" style="left:0px;top:178px;width:12px;height:1px;background:#e0e0e0"></div>
<div class="a" style="left:0px;top:196px;width:1058px;height:1px;background:#f0f0f0"></div>
<div class="a" style="left:0px;top:196px;width:12px;height:1px;background:#e0e0e0"></div>
<div class="a" style="left:0px;top:214px;width:1058px;height:1px;background:#f0f0f0"></div>
<div class="a" style="left:0px;top:214px;width:12px;height:1px;background:#e0e0e0"></div>
<div class="a" style="left:0px;top:232px;width:1058px;height:1px;background:#f0f0f0"></div>
<div class="a" style="left:0px;top:232px;width:12px;height:1px;background:#e0e0e0"></div>
<div class="a" style="left:0px;top:250px;width:1058px;height:1px;background:#f0f0f0"></div>
<div class="a" style="left:0px;top:250px;width:12px;height:1px;background:#e0e0e0"></div>
<div class="a" style="left:0px;top:268px;width:1058px;height:1px;background:#f0f0f0"></div>
<div class="a" style="left:0px;top:268px;width:12px;height:1px;background:#e0e0e0"></div>
<div class="a" style="left:13px;top:0px;width:38px;height:34px;background:#f0f0f0;border-left:1px solid #fff;border-top:1px solid #fff;border-right:1px solid #dcdcdc;box-shadow:inset -1px -1px 0 #a0a0a0"></div>
<div class="a" style="left:13px;top:34px;width:38px;height:1px;background:#e4e4e4"></div>
<div class="a" style="left:51px;top:0px;width:54px;height:34px;background:#f0f0f0;border-left:1px solid #fff;border-top:1px solid #fff;border-right:1px solid #dcdcdc;box-shadow:inset -1px -1px 0 #a0a0a0"></div>
<div class="a" style="left:51px;top:34px;width:54px;height:1px;background:#e4e4e4"></div>
<div class="a" style="left:105px;top:0px;width:64px;height:34px;background:#f0f0f0;border-left:1px solid #fff;border-top:1px solid #fff;border-right:1px solid #dcdcdc;box-shadow:inset -1px -1px 0 #a0a0a0"></div>
<div class="a" style="left:105px;top:34px;width:64px;height:1px;background:#e4e4e4"></div>
<div class="a" style="left:169px;top:0px;width:305px;height:34px;background:#f0f0f0;border-left:1px solid #fff;border-top:1px solid #fff;border-right:1px solid #dcdcdc;box-shadow:inset -1px -1px 0 #a0a0a0"></div>
<div class="a" style="left:169px;top:34px;width:305px;height:1px;background:#e4e4e4"></div>
<div class="a" style="left:474px;top:0px;width:125px;height:34px;background:#f0f0f0;border-left:1px solid #fff;border-top:1px solid #fff;border-right:1px solid #dcdcdc;box-shadow:inset -1px -1px 0 #a0a0a0"></div>
<div class="a" style="left:474px;top:34px;width:125px;height:1px;background:#e4e4e4"></div>
<div class="a" style="left:599px;top:0px;width:174px;height:34px;background:#f0f0f0;border-left:1px solid #fff;border-top:1px solid #fff;border-right:1px solid #dcdcdc;box-shadow:inset -1px -1px 0 #a0a0a0"></div>
<div class="a" style="left:599px;top:34px;width:174px;height:1px;background:#e4e4e4"></div>
<div class="a" style="left:773px;top:0px;width:103px;height:34px;background:#f0f0f0;border-left:1px solid #fff;border-top:1px solid #fff;border-right:1px solid #dcdcdc;box-shadow:inset -1px -1px 0 #a0a0a0"></div>
<div class="a" style="left:773px;top:34px;width:103px;height:1px;background:#e4e4e4"></div>
<div class="a" style="left:876px;top:0px;width:84px;height:34px;background:#f0f0f0;border-left:1px solid #fff;border-top:1px solid #fff;border-right:1px solid #dcdcdc;box-shadow:inset -1px -1px 0 #a0a0a0"></div>
<div class="a" style="left:876px;top:34px;width:84px;height:1px;background:#e4e4e4"></div>
<div class="a" style="left:960px;top:0px;width:98px;height:34px;background:#f0f0f0;border-left:1px solid #fff;border-top:1px solid #fff;border-right:1px solid #dcdcdc;box-shadow:inset -1px -1px 0 #a0a0a0"></div>
<div class="a" style="left:960px;top:34px;width:98px;height:1px;background:#e4e4e4"></div>
<div class="a" style="left:50px;top:35px;width:1px;height:234px;background:#e8e8e8"></div>
<div class="a" style="left:104px;top:35px;width:1px;height:234px;background:#e8e8e8"></div>
<div class="a" style="left:168px;top:35px;width:1px;height:234px;background:#e8e8e8"></div>
<div class="a" style="left:473px;top:35px;width:1px;height:234px;background:#e8e8e8"></div>
<div class="a" style="left:598px;top:35px;width:1px;height:234px;background:#e8e8e8"></div>
<div class="a" style="left:772px;top:35px;width:1px;height:234px;background:#e8e8e8"></div>
<div class="a" style="left:875px;top:35px;width:1px;height:234px;background:#e8e8e8"></div>
<div class="a" style="left:959px;top:35px;width:1px;height:234px;background:#e8e8e8"></div>
<div class="t" style="left:13px;top:10px;width:37px;text-align:center;line-height:13px;letter-spacing:-0.2px">Marcar</div>
<div class="t" style="left:51px;top:4px;width:51px;text-align:right;line-height:13px;letter-spacing:-0.3px">Código<br>TEF</div>
<div class="t" style="left:105px;top:4px;width:61px;text-align:right;line-height:13px;letter-spacing:-0.3px">Número da<br>Parcela</div>
<div class="t" style="left:172px;top:10px;line-height:13px">Rede</div>
<div class="t" style="left:477px;top:10px;line-height:13px">Bandeira</div>
<div class="t" style="left:602px;top:10px;line-height:13px">MPE</div>
<div class="t" style="left:773px;top:4px;width:102px;text-align:center;line-height:13px;letter-spacing:-0.2px">Data de<br>Movimento</div>
<div class="t" style="left:876px;top:4px;width:83px;text-align:center;line-height:13px;letter-spacing:-0.2px">Data de<br>Vencimento</div>
<div class="t" style="left:960px;top:4px;width:95px;text-align:right;line-height:13px;letter-spacing:-0.3px">Valor<br>Bruto</div>
<svg class="a" style="left:582px;top:1px" width="12" height="12" shape-rendering="crispEdges"><rect x="1" y="3" width="1" height="8" fill="#fff"/><rect x="0" y="4" width="1" height="1" fill="#fff"/><path d="M6 11.5 H11 L9 1.5" fill="none" stroke="#fff" stroke-width="1"/><rect x="9" y="1" width="1" height="2" fill="#777"/><rect x="8" y="3" width="1" height="2" fill="#777"/><rect x="7" y="5" width="1" height="2" fill="#777"/><rect x="6" y="7" width="1" height="2" fill="#777"/></svg>
<div class="a" style="left:13px;top:35px;width:1045px;height:17px;background:#d1e8ee"></div>
<div class="a" style="left:104px;top:35px;width:1px;height:17px;background:#e8f2f4"></div>
<div class="a" style="left:168px;top:35px;width:1px;height:17px;background:#e8f2f4"></div>
<div class="a" style="left:473px;top:35px;width:1px;height:17px;background:#e8f2f4"></div>
<div class="a" style="left:598px;top:35px;width:1px;height:17px;background:#e8f2f4"></div>
<div class="a" style="left:772px;top:35px;width:1px;height:17px;background:#e8f2f4"></div>
<div class="a" style="left:875px;top:35px;width:1px;height:17px;background:#e8f2f4"></div>
<div class="a" style="left:959px;top:35px;width:1px;height:17px;background:#e8f2f4"></div>
<div class="a" style="left:13px;top:35px;width:37px;height:17px;background:#3399ff"></div>
<svg class="a" style="left:4px;top:38px" width="7" height="11" shape-rendering="crispEdges"><rect x="0" y="0" width="7" height="11" fill="#f0f0f0"/><path d="M0 0 L6 5.5 L0 11 Z" fill="#000"/></svg>
<div class="a" style="left:25px;top:37px;width:13px;height:13px;background:#fff;border-style:solid;border-width:1px;border-color:#808080 #fff #fff #808080;box-shadow:inset 1px 1px 0 #000,inset -1px -1px 0 #e3e3e3"></div>
<div class="t" style="left:51px;top:38px;width:49px;text-align:right;color:#000">3</div>
<div class="t" style="left:105px;top:38px;width:59px;text-align:right;color:#000">1/1</div>
<div class="t" style="left:171px;top:38px;color:#000">RedeCard</div>
<div class="t" style="left:476px;top:38px;color:#000">MASTERCARD</div>
<div class="a" style="left:599px;top:38px;width:173px;height:14px;overflow:hidden"><div class="t" style="left:2px;top:0;letter-spacing:-0.2px"></div></div>
<div class="t" style="left:773px;top:38px;width:102px;text-align:center;color:#000">03/11/16 09:22</div>
<div class="t" style="left:876px;top:38px;width:83px;text-align:center;color:#000">05/12/16</div>
<div class="a" style="left:960px;top:38px;width:97px;height:14px;overflow:hidden"><div class="t" style="right:-19px;top:0;color:#000">62,00</div></div>
<div class="a" style="left:25px;top:55px;width:13px;height:13px;background:#fff;border-style:solid;border-width:1px;border-color:#808080 #fff #fff #808080;box-shadow:inset 1px 1px 0 #000,inset -1px -1px 0 #e3e3e3"></div>
<div class="t" style="left:51px;top:56px;width:49px;text-align:right;color:#800000">6</div>
<div class="t" style="left:105px;top:56px;width:59px;text-align:right;color:#800000">1/3</div>
<div class="t" style="left:171px;top:56px;color:#000">RedeCard</div>
<div class="t" style="left:476px;top:56px;color:#000">REDESHOP</div>
<div class="a" style="left:599px;top:56px;width:173px;height:14px;overflow:hidden"><div class="t" style="left:2px;top:0;letter-spacing:-0.2px">Cartão de Crédito Parcelado pelo Es</div></div>
<div class="t" style="left:773px;top:56px;width:102px;text-align:center;color:#000080">23/12/16 15:27</div>
<div class="t" style="left:876px;top:56px;width:83px;text-align:center;color:#000080">23/01/17</div>
<div class="a" style="left:960px;top:56px;width:97px;height:14px;overflow:hidden"><div class="t" style="right:-19px;top:0;color:#800000">83,00</div></div>
<div class="a" style="left:25px;top:73px;width:13px;height:13px;background:#fff;border-style:solid;border-width:1px;border-color:#808080 #fff #fff #808080;box-shadow:inset 1px 1px 0 #000,inset -1px -1px 0 #e3e3e3"></div>
<div class="t" style="left:51px;top:74px;width:49px;text-align:right;color:#800000">6</div>
<div class="t" style="left:105px;top:74px;width:59px;text-align:right;color:#800000">2/3</div>
<div class="t" style="left:171px;top:74px;color:#000">RedeCard</div>
<div class="t" style="left:476px;top:74px;color:#000">REDESHOP</div>
<div class="a" style="left:599px;top:74px;width:173px;height:14px;overflow:hidden"><div class="t" style="left:2px;top:0;letter-spacing:-0.2px">Cartão de Crédito Parcelado pelo Es</div></div>
<div class="t" style="left:773px;top:74px;width:102px;text-align:center;color:#000080">23/12/16 15:27</div>
<div class="t" style="left:876px;top:74px;width:83px;text-align:center;color:#000080">21/02/17</div>
<div class="a" style="left:960px;top:74px;width:97px;height:14px;overflow:hidden"><div class="t" style="right:-19px;top:0;color:#800000">83,00</div></div>
<div class="a" style="left:25px;top:91px;width:13px;height:13px;background:#fff;border-style:solid;border-width:1px;border-color:#808080 #fff #fff #808080;box-shadow:inset 1px 1px 0 #000,inset -1px -1px 0 #e3e3e3"></div>
<div class="t" style="left:51px;top:92px;width:49px;text-align:right;color:#800000">7</div>
<div class="t" style="left:105px;top:92px;width:59px;text-align:right;color:#800000">3/3</div>
<div class="t" style="left:171px;top:92px;color:#000">VisaNet</div>
<div class="t" style="left:476px;top:92px;color:#000">VISA</div>
<div class="a" style="left:599px;top:92px;width:173px;height:14px;overflow:hidden"><div class="t" style="left:2px;top:0;letter-spacing:-0.2px">Cartão de Crédito Parcelado pelo Es</div></div>
<div class="t" style="left:773px;top:92px;width:102px;text-align:center;color:#000080">23/12/16 15:27</div>
<div class="t" style="left:876px;top:92px;width:83px;text-align:center;color:#000080">27/03/17</div>
<div class="a" style="left:960px;top:92px;width:97px;height:14px;overflow:hidden"><div class="t" style="right:-19px;top:0;color:#800000">1.500,00</div></div>
<div class="a" style="left:25px;top:109px;width:13px;height:13px;background:#fff;border-style:solid;border-width:1px;border-color:#808080 #fff #fff #808080;box-shadow:inset 1px 1px 0 #000,inset -1px -1px 0 #e3e3e3"></div>
<div class="t" style="left:51px;top:110px;width:49px;text-align:right;color:#800000">14</div>
<div class="t" style="left:105px;top:110px;width:59px;text-align:right;color:#800000">2/20</div>
<div class="t" style="left:171px;top:110px;color:#000">VisaNet</div>
<div class="t" style="left:476px;top:110px;color:#000">VISA</div>
<div class="a" style="left:599px;top:110px;width:173px;height:14px;overflow:hidden"><div class="t" style="left:2px;top:0;letter-spacing:-0.2px">Cartão de Crédito Parcelado pelo Es</div></div>
<div class="t" style="left:773px;top:110px;width:102px;text-align:center;color:#000080">07/02/17 14:31</div>
<div class="t" style="left:876px;top:110px;width:83px;text-align:center;color:#000080">10/04/17</div>
<div class="a" style="left:960px;top:110px;width:97px;height:14px;overflow:hidden"><div class="t" style="right:-19px;top:0;color:#800000">225,00</div></div>
<div class="a" style="left:25px;top:127px;width:13px;height:13px;background:#fff;border-style:solid;border-width:1px;border-color:#808080 #fff #fff #808080;box-shadow:inset 1px 1px 0 #000,inset -1px -1px 0 #e3e3e3"></div>
<svg class="a" style="left:28px;top:130px" width="7" height="7" shape-rendering="crispEdges"><rect x="6" y="0" width="1" height="1"/><rect x="5" y="1" width="1" height="1"/><rect x="6" y="1" width="1" height="1"/><rect x="0" y="2" width="1" height="1"/><rect x="4" y="2" width="1" height="1"/><rect x="5" y="2" width="1" height="1"/><rect x="6" y="2" width="1" height="1"/><rect x="0" y="3" width="1" height="1"/><rect x="1" y="3" width="1" height="1"/><rect x="3" y="3" width="1" height="1"/><rect x="4" y="3" width="1" height="1"/><rect x="5" y="3" width="1" height="1"/><rect x="0" y="4" width="1" height="1"/><rect x="1" y="4" width="1" height="1"/><rect x="2" y="4" width="1" height="1"/><rect x="3" y="4" width="1" height="1"/><rect x="4" y="4" width="1" height="1"/><rect x="1" y="5" width="1" height="1"/><rect x="2" y="5" width="1" height="1"/><rect x="3" y="5" width="1" height="1"/><rect x="2" y="6" width="1" height="1"/></svg>
<div class="t" style="left:51px;top:128px;width:49px;text-align:right;color:#800000">14</div>
<div class="t" style="left:105px;top:128px;width:59px;text-align:right;color:#800000">13/20</div>
<div class="t" style="left:171px;top:128px;color:#000">VisaNet</div>
<div class="t" style="left:476px;top:128px;color:#000">VISA</div>
<div class="a" style="left:599px;top:128px;width:173px;height:14px;overflow:hidden"><div class="t" style="left:2px;top:0;letter-spacing:-0.2px">Cartão de Crédito Parcelado pelo Es</div></div>
<div class="t" style="left:773px;top:128px;width:102px;text-align:center;color:#000080">07/02/17 14:31</div>
<div class="t" style="left:876px;top:128px;width:83px;text-align:center;color:#000080">19/03/18</div>
<div class="a" style="left:960px;top:128px;width:97px;height:14px;overflow:hidden"><div class="t" style="right:-19px;top:0;color:#800000">225,00</div></div>
<div class="a" style="left:25px;top:145px;width:13px;height:13px;background:#fff;border-style:solid;border-width:1px;border-color:#808080 #fff #fff #808080;box-shadow:inset 1px 1px 0 #000,inset -1px -1px 0 #e3e3e3"></div>
<svg class="a" style="left:28px;top:148px" width="7" height="7" shape-rendering="crispEdges"><rect x="6" y="0" width="1" height="1"/><rect x="5" y="1" width="1" height="1"/><rect x="6" y="1" width="1" height="1"/><rect x="0" y="2" width="1" height="1"/><rect x="4" y="2" width="1" height="1"/><rect x="5" y="2" width="1" height="1"/><rect x="6" y="2" width="1" height="1"/><rect x="0" y="3" width="1" height="1"/><rect x="1" y="3" width="1" height="1"/><rect x="3" y="3" width="1" height="1"/><rect x="4" y="3" width="1" height="1"/><rect x="5" y="3" width="1" height="1"/><rect x="0" y="4" width="1" height="1"/><rect x="1" y="4" width="1" height="1"/><rect x="2" y="4" width="1" height="1"/><rect x="3" y="4" width="1" height="1"/><rect x="4" y="4" width="1" height="1"/><rect x="1" y="5" width="1" height="1"/><rect x="2" y="5" width="1" height="1"/><rect x="3" y="5" width="1" height="1"/><rect x="2" y="6" width="1" height="1"/></svg>
<div class="t" style="left:51px;top:146px;width:49px;text-align:right;color:#800000">14</div>
<div class="t" style="left:105px;top:146px;width:59px;text-align:right;color:#800000">14/20</div>
<div class="t" style="left:171px;top:146px;color:#000">VisaNet</div>
<div class="t" style="left:476px;top:146px;color:#000">VISA</div>
<div class="a" style="left:599px;top:146px;width:173px;height:14px;overflow:hidden"><div class="t" style="left:2px;top:0;letter-spacing:-0.2px">Cartão de Crédito Parcelado pelo Es</div></div>
<div class="t" style="left:773px;top:146px;width:102px;text-align:center;color:#000080">07/02/17 14:31</div>
<div class="t" style="left:876px;top:146px;width:83px;text-align:center;color:#000080">17/04/18</div>
<div class="a" style="left:960px;top:146px;width:97px;height:14px;overflow:hidden"><div class="t" style="right:-19px;top:0;color:#800000">225,00</div></div>
<div class="a" style="left:25px;top:163px;width:13px;height:13px;background:#fff;border-style:solid;border-width:1px;border-color:#808080 #fff #fff #808080;box-shadow:inset 1px 1px 0 #000,inset -1px -1px 0 #e3e3e3"></div>
<div class="t" style="left:51px;top:164px;width:49px;text-align:right;color:#800000">14</div>
<div class="t" style="left:105px;top:164px;width:59px;text-align:right;color:#800000">15/20</div>
<div class="t" style="left:171px;top:164px;color:#000">VisaNet</div>
<div class="t" style="left:476px;top:164px;color:#000">VISA</div>
<div class="a" style="left:599px;top:164px;width:173px;height:14px;overflow:hidden"><div class="t" style="left:2px;top:0;letter-spacing:-0.2px">Cartão de Crédito Parcelado pelo Es</div></div>
<div class="t" style="left:773px;top:164px;width:102px;text-align:center;color:#000080">07/02/17 14:31</div>
<div class="t" style="left:876px;top:164px;width:83px;text-align:center;color:#000080">18/05/18</div>
<div class="a" style="left:960px;top:164px;width:97px;height:14px;overflow:hidden"><div class="t" style="right:-19px;top:0;color:#800000">225,00</div></div>
<div class="a" style="left:25px;top:181px;width:13px;height:13px;background:#fff;border-style:solid;border-width:1px;border-color:#808080 #fff #fff #808080;box-shadow:inset 1px 1px 0 #000,inset -1px -1px 0 #e3e3e3"></div>
<div class="t" style="left:51px;top:182px;width:49px;text-align:right;color:#800000">14</div>
<div class="t" style="left:105px;top:182px;width:59px;text-align:right;color:#800000">16/20</div>
<div class="t" style="left:171px;top:182px;color:#000">VisaNet</div>
<div class="t" style="left:476px;top:182px;color:#000">VISA</div>
<div class="a" style="left:599px;top:182px;width:173px;height:14px;overflow:hidden"><div class="t" style="left:2px;top:0;letter-spacing:-0.2px">Cartão de Crédito Parcelado pelo Es</div></div>
<div class="t" style="left:773px;top:182px;width:102px;text-align:center;color:#000080">07/02/17 14:31</div>
<div class="t" style="left:876px;top:182px;width:83px;text-align:center;color:#000080">18/06/18</div>
<div class="a" style="left:960px;top:182px;width:97px;height:14px;overflow:hidden"><div class="t" style="right:-19px;top:0;color:#800000">225,00</div></div>
<div class="a" style="left:25px;top:199px;width:13px;height:13px;background:#fff;border-style:solid;border-width:1px;border-color:#808080 #fff #fff #808080;box-shadow:inset 1px 1px 0 #000,inset -1px -1px 0 #e3e3e3"></div>
<div class="t" style="left:51px;top:200px;width:49px;text-align:right;color:#800000">14</div>
<div class="t" style="left:105px;top:200px;width:59px;text-align:right;color:#800000">17/20</div>
<div class="t" style="left:171px;top:200px;color:#000">VisaNet</div>
<div class="t" style="left:476px;top:200px;color:#000">VISA</div>
<div class="a" style="left:599px;top:200px;width:173px;height:14px;overflow:hidden"><div class="t" style="left:2px;top:0;letter-spacing:-0.2px">Cartão de Crédito Parcelado pelo Es</div></div>
<div class="t" style="left:773px;top:200px;width:102px;text-align:center;color:#000080">07/02/17 14:31</div>
<div class="t" style="left:876px;top:200px;width:83px;text-align:center;color:#000080">19/07/18</div>
<div class="a" style="left:960px;top:200px;width:97px;height:14px;overflow:hidden"><div class="t" style="right:-19px;top:0;color:#800000">225,00</div></div>
<div class="a" style="left:25px;top:217px;width:13px;height:13px;background:#fff;border-style:solid;border-width:1px;border-color:#808080 #fff #fff #808080;box-shadow:inset 1px 1px 0 #000,inset -1px -1px 0 #e3e3e3"></div>
<div class="t" style="left:51px;top:218px;width:49px;text-align:right;color:#800000">14</div>
<div class="t" style="left:105px;top:218px;width:59px;text-align:right;color:#800000">18/20</div>
<div class="t" style="left:171px;top:218px;color:#000">VisaNet</div>
<div class="t" style="left:476px;top:218px;color:#000">VISA</div>
<div class="a" style="left:599px;top:218px;width:173px;height:14px;overflow:hidden"><div class="t" style="left:2px;top:0;letter-spacing:-0.2px">Cartão de Crédito Parcelado pelo Es</div></div>
<div class="t" style="left:773px;top:218px;width:102px;text-align:center;color:#000080">07/02/17 14:31</div>
<div class="t" style="left:876px;top:218px;width:83px;text-align:center;color:#000080">20/08/18</div>
<div class="a" style="left:960px;top:218px;width:97px;height:14px;overflow:hidden"><div class="t" style="right:-19px;top:0;color:#800000">225,00</div></div>
<div class="a" style="left:25px;top:235px;width:13px;height:13px;background:#fff;border-style:solid;border-width:1px;border-color:#808080 #fff #fff #808080;box-shadow:inset 1px 1px 0 #000,inset -1px -1px 0 #e3e3e3"></div>
<div class="t" style="left:51px;top:236px;width:49px;text-align:right;color:#800000">14</div>
<div class="t" style="left:105px;top:236px;width:59px;text-align:right;color:#800000">19/20</div>
<div class="t" style="left:171px;top:236px;color:#000">VisaNet</div>
<div class="t" style="left:476px;top:236px;color:#000">VISA</div>
<div class="a" style="left:599px;top:236px;width:173px;height:14px;overflow:hidden"><div class="t" style="left:2px;top:0;letter-spacing:-0.2px">Cartão de Crédito Parcelado pelo Es</div></div>
<div class="t" style="left:773px;top:236px;width:102px;text-align:center;color:#000080">07/02/17 14:31</div>
<div class="t" style="left:876px;top:236px;width:83px;text-align:center;color:#000080">19/09/18</div>
<div class="a" style="left:960px;top:236px;width:97px;height:14px;overflow:hidden"><div class="t" style="right:-19px;top:0;color:#800000">225,00</div></div>
<div class="a" style="left:25px;top:253px;width:13px;height:13px;background:#fff;border-style:solid;border-width:1px;border-color:#808080 #fff #fff #808080;box-shadow:inset 1px 1px 0 #000,inset -1px -1px 0 #e3e3e3"></div>
<div class="t" style="left:51px;top:254px;width:49px;text-align:right;color:#800000">14</div>
<div class="t" style="left:105px;top:254px;width:59px;text-align:right;color:#800000">20/20</div>
<div class="t" style="left:171px;top:254px;color:#000">VisaNet</div>
<div class="t" style="left:476px;top:254px;color:#000">VISA</div>
<div class="a" style="left:599px;top:254px;width:173px;height:14px;overflow:hidden"><div class="t" style="left:2px;top:0;letter-spacing:-0.2px">Cartão de Crédito Parcelado pelo Es</div></div>
<div class="t" style="left:773px;top:254px;width:102px;text-align:center;color:#000080">07/02/17 14:31</div>
<div class="t" style="left:876px;top:254px;width:83px;text-align:center;color:#000080">22/10/18</div>
<div class="a" style="left:960px;top:254px;width:97px;height:14px;overflow:hidden"><div class="t" style="right:-19px;top:0;color:#800000">225,00</div></div>
</div>
<div class="a" style="left:8px;top:595px;width:1278px;height:41px;border-top:1px solid #fff;border-left:1px solid #fff;border-bottom:1px solid #a0a0a0;border-right:1px solid #a0a0a0"></div>
<div class="t" style="left:19px;top:613px;font-weight:bold;font-size:12px">Marcados:</div>
<div class="t" style="left:99px;top:613px;font-weight:bold;font-size:12px">Total Bruto:</div>
<div class="a" style="left:174px;top:608px;width:90px;height:18px;background:#f0f0f0;border-style:solid;border-width:1px;border-color:#808080 #fff #fff #808080;box-shadow:inset 1px 1px 0 #a0a0a0"></div>
<div class="t" style="left:174px;top:612px;width:89px;text-align:right;font-weight:bold;font-size:11.5px">451,18</div>
<div class="t" style="left:297px;top:613px;font-weight:bold;font-size:12px">Total Encargos:</div>
<div class="a" style="left:396px;top:608px;width:90px;height:18px;background:#f0f0f0;border-style:solid;border-width:1px;border-color:#808080 #fff #fff #808080;box-shadow:inset 1px 1px 0 #a0a0a0"></div>
<div class="t" style="left:396px;top:612px;width:89px;text-align:right;font-weight:bold;font-size:11.5px">9,22</div>
<div class="t" style="left:518px;top:613px;font-weight:bold;font-size:12px">Total Líquido:</div>
<div class="a" style="left:607px;top:608px;width:90px;height:18px;background:#f0f0f0;border-style:solid;border-width:1px;border-color:#808080 #fff #fff #808080;box-shadow:inset 1px 1px 0 #a0a0a0"></div>
<div class="t" style="left:607px;top:612px;width:89px;text-align:right;font-weight:bold;font-size:11.5px">441,96</div>
<div class="a" style="left:1197px;top:643px;width:78px;height:24px;background:#e1e1e1;border:1px solid #adadad"></div>
<svg class="a" style="left:1213px;top:646px" width="18" height="18" shape-rendering="crispEdges">
<defs><pattern id="chk" width="2" height="2" patternUnits="userSpaceOnUse"><rect width="2" height="2" fill="#a8a8a0"/><rect width="1" height="1" fill="#808000"/><rect x="1" y="1" width="1" height="1" fill="#808000"/></pattern></defs>
<rect x="6" y="1" width="11" height="13" fill="#000"/>
<rect x="7" y="2" width="5" height="10" fill="#ffff00"/>
<rect x="1" y="13" width="6" height="1" fill="#000"/>
<rect x="1" y="14" width="6" height="2" fill="url(#chk)"/><rect x="11" y="14" width="6" height="2" fill="url(#chk)"/>
</svg>
<svg class="a" style="left:1213px;top:646px" width="18" height="18">
<path d="M9 4 L15.5 1.5 V13.5 L9.5 15.5 Z" fill="url(#chk)" stroke="#000" stroke-width="0.9"/>
<path d="M9.6 4.5 V14.5" stroke="#fff" stroke-width="1"/>
<rect x="11" y="9" width="2" height="1.2" fill="#000"/>
</svg>
<div class="t" style="left:1241px;top:650px">Sair</div>
</body></html>
